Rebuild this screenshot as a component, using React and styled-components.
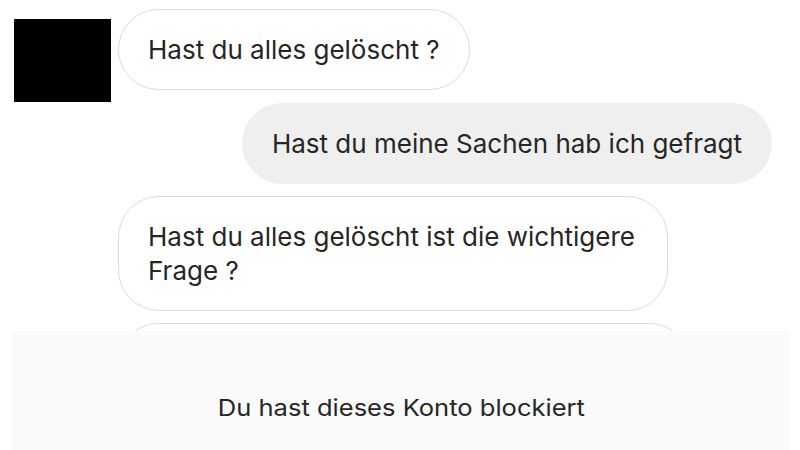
import styled, { createGlobalStyle } from "styled-components";

const GlobalStyle = createGlobalStyle`
  html, body {
    margin: 0;
    padding: 0;
    background: #ffffff;
    overflow: hidden;
  }
  body {
    font-family: Inter, "Noto Sans", sans-serif;
    color: #262626;
  }
`;

const Screen = styled.div`
  position: relative;
  width: 800px;
  height: 450px;
  overflow: hidden;
  background: #ffffff;
`;

const Thread = styled.div`
  display: flex;
  flex-direction: column;
  gap: 12px;
  padding: 9px 28px 0 14px;
`;

const Row = styled.div`
  display: flex;
  align-items: flex-start;
  justify-content: ${(props) => (props.$mine ? "flex-end" : "flex-start")};
  padding-left: ${(props) => (props.$indent ? "104px" : "0")};
`;

/* the avatar hangs a little below its row, into the gap */
const Avatar = styled.div`
  width: 97px;
  height: 83px;
  margin: 10px 7px -11px 0;
  background: #000000;
  flex-shrink: 0;
`;

const Bubble = styled.div`
  box-sizing: border-box;
  width: ${(props) => props.$width || "auto"};
  max-width: ${(props) => props.$max || "600px"};
  padding: 23px 29px 22px;
  border-radius: 41px;
  border: 1px solid ${(props) => (props.$mine ? "#efefef" : "#dbdbdb")};
  background: ${(props) => (props.$mine ? "#efefef" : "#ffffff")};
  font-size: 26px;
  line-height: 34px;
  color: #262626;
`;

const BlockedBar = styled.div`
  position: absolute;
  left: 12px;
  right: 10px;
  top: 331px;
  bottom: 0;
  background: #fafafa;
  display: flex;
  justify-content: center;
  padding-top: 62px;
  box-sizing: border-box;
`;

const BlockedText = styled.div`
  font-size: 23px;
  line-height: 30px;
  color: #262626;
  transform: scaleX(1.11);
`;

export default function App() {
  return (
    <Screen>
      <GlobalStyle />
      <Thread>
        <Row>
          <Avatar />
          <Bubble>Hast du alles gelöscht ?</Bubble>
        </Row>
        <Row $mine>
          <Bubble $mine>Hast du meine Sachen hab ich gefragt</Bubble>
        </Row>
        <Row $indent>
          <Bubble $max="550px">
            Hast du alles gelöscht ist die wichtigere Frage ?
          </Bubble>
        </Row>
        <Row $indent>
          <Bubble $width="572px">Ok</Bubble>
        </Row>
      </Thread>
      <BlockedBar>
        <BlockedText>Du hast dieses Konto blockiert</BlockedText>
      </BlockedBar>
    </Screen>
  );
}
